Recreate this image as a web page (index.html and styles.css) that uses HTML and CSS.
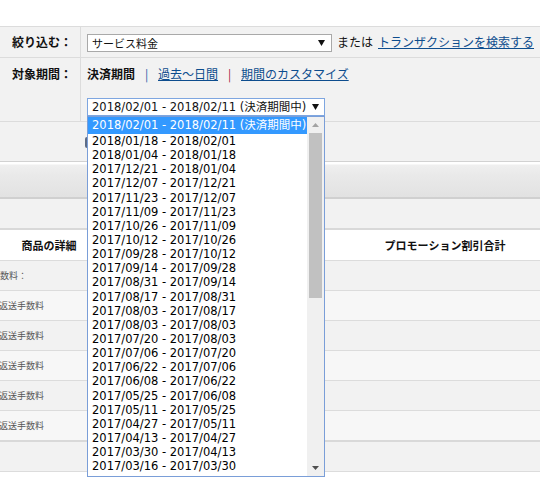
FILE: index.html
```html
<!DOCTYPE html>
<html lang="ja">
<head>
<meta charset="utf-8">
<title>トランザクション</title>
<link rel="stylesheet" href="styles.css">
</head>
<body>
<div class="page">
  <div class="filters">
    <div class="frow r1">
      <div class="flabel">絞り込む：</div>
      <div class="fbody">
        <div class="sel sel1"><span>サービス料金</span><svg class="arr" width="7" height="6" viewBox="0 0 7 6"><polygon points="0,0 7,0 3.5,6" fill="#111"/></svg></div>
        <span class="or">または</span>
        <a class="lnk" href="#">トランザクションを検索する</a>
      </div>
    </div>
    <div class="frow r2">
      <div class="flabel top">対象期間：</div>
      <div class="fbody col">
        <div class="periods">
          <b>決済期間</b><span class="sep blue">|</span><a class="lnk" href="#">過去～日間</a><span class="sep red">|</span><a class="lnk" href="#">期間のカスタマイズ</a>
        </div>
        <div class="selwrap">
          <div class="sel sel2"><span>2018/02/01 - 2018/02/11 (決済期間中)</span><svg class="arr" width="7" height="6" viewBox="0 0 7 6"><polygon points="0,0 7,0 3.5,6" fill="#111"/></svg></div>
          <div class="dropdown">
            <div class="dlist">
              <div class="ditem cur">2018/02/01 - 2018/02/11 (決済期間中)</div>
              <div class="ditem">2018/01/18 - 2018/02/01</div>
              <div class="ditem">2018/01/04 - 2018/01/18</div>
              <div class="ditem">2017/12/21 - 2018/01/04</div>
              <div class="ditem">2017/12/07 - 2017/12/21</div>
              <div class="ditem">2017/11/23 - 2017/12/07</div>
              <div class="ditem">2017/11/09 - 2017/11/23</div>
              <div class="ditem">2017/10/26 - 2017/11/09</div>
              <div class="ditem">2017/10/12 - 2017/10/26</div>
              <div class="ditem">2017/09/28 - 2017/10/12</div>
              <div class="ditem">2017/09/14 - 2017/09/28</div>
              <div class="ditem">2017/08/31 - 2017/09/14</div>
              <div class="ditem">2017/08/17 - 2017/08/31</div>
              <div class="ditem">2017/08/03 - 2017/08/17</div>
              <div class="ditem">2017/08/03 - 2017/08/03</div>
              <div class="ditem">2017/07/20 - 2017/08/03</div>
              <div class="ditem">2017/07/06 - 2017/07/20</div>
              <div class="ditem">2017/06/22 - 2017/07/06</div>
              <div class="ditem">2017/06/08 - 2017/06/22</div>
              <div class="ditem">2017/05/25 - 2017/06/08</div>
              <div class="ditem">2017/05/11 - 2017/05/25</div>
              <div class="ditem">2017/04/27 - 2017/05/11</div>
              <div class="ditem">2017/04/13 - 2017/04/27</div>
              <div class="ditem">2017/03/30 - 2017/04/13</div>
              <div class="ditem">2017/03/16 - 2017/03/30</div>
            </div>
            <div class="dscroll">
              <div class="sbtn"><svg width="7" height="4" viewBox="0 0 7 4"><polygon points="0,4 7,4 3.5,0" fill="#a3a3a3"/></svg></div>
              <div class="thumb"></div>
              <div class="sfill"></div>
              <div class="sbtn"><svg width="7" height="4" viewBox="0 0 7 4"><polygon points="0,0 7,0 3.5,4" fill="#505050"/></svg></div>
            </div>
          </div>
        </div>
      </div>
    </div>
    <div class="frow r3">
      <div class="btnedge"></div>
    </div>
  </div>
  <div class="hbar"></div>
  <div class="band"></div>
  <div class="tbl">
    <div class="trow thead">
      <div class="c1">商品の詳細</div>
      <div class="c2"></div>
      <div class="c3">プロモーション割引合計</div>
      <div class="c4"></div>
    </div>
    <div class="trow odd"><span class="cut c9">手数料：</span></div>
    <div class="trow even"><span class="cut c1x">返送手数料</span></div>
    <div class="trow odd"><span class="cut c1x">返送手数料</span></div>
    <div class="trow even"><span class="cut c1x">返送手数料</span></div>
    <div class="trow odd"><span class="cut c1x">返送手数料</span></div>
    <div class="trow even last"><span class="cut c1x">返送手数料</span></div>
    <div class="trow odd foot"></div>
  </div>
</div>
</body>
</html>
```
FILE: styles.css
```css
html, body {
  margin: 0;
  padding: 0;
  background: #fff;
}
body {
  width: 540px;
  height: 501px;
  overflow: hidden;
  font-family: "Noto Sans CJK JP", "Noto Sans", sans-serif;
  font-size: 12px;
  color: #111;
}
.page {
  padding-top: 26px;
}
.filters {
  background: #f2f2f2;
  border-top: 1px solid #dcdcdc;
}
.frow {
  display: flex;
  border-bottom: 1px solid #dcdcdc;
}
.r1 {
  height: 30px;
  align-items: stretch;
}
.r2 {
  height: 63px;
  align-items: stretch;
}
.r3 {
  height: 39px;
  border-bottom: none;
}
.flabel {
  width: 81px;
  flex: none;
  box-sizing: border-box;
  border-right: 1px solid #dcdcdc;
  padding-right: 8px;
  display: flex;
  align-items: center;
  justify-content: flex-end;
  font-weight: bold;
  line-height: 16px;
}
.flabel.top {
  align-items: flex-start;
  padding-top: 8px;
}
.fbody {
  display: flex;
  align-items: center;
  padding-left: 6px;
}
.fbody.col {
  flex-direction: column;
  align-items: flex-start;
  padding-top: 8px;
}
.sel {
  box-sizing: border-box;
  height: 18px;
  background: #fff;
  display: flex;
  align-items: center;
  justify-content: space-between;
  font-size: 11px;
  line-height: 16px;
  white-space: nowrap;
}
.sel1 {
  width: 245px;
  border: 1px solid #a9a9a9;
  padding: 0 6px 0 4px;
  margin-top: 1px;
}
.sel2 {
  width: 238px;
  border: 1px solid #7ea6e0;
  padding: 0 5px 0 4px;
  font-family: "DejaVu Sans", "Noto Sans CJK JP", sans-serif;
  font-size: 11.5px;
}
.arr {
  display: block;
  flex: none;
}
.or {
  margin-left: 5px;
  line-height: 16px;
}
.lnk {
  color: #0d4d8e;
  text-decoration: underline;
}
.r1 .lnk {
  margin-left: 5px;
  line-height: 16px;
}
.periods {
  line-height: 16px;
  height: 16px;
  display: flex;
  white-space: nowrap;
}
.periods b {
  font-weight: bold;
}
.sep {
  display: inline-block;
  width: 23px;
  text-align: center;
}
.sep.blue {
  color: #1f5fa6;
}
.sep.red {
  color: #9a1a3c;
}
.selwrap {
  position: relative;
  margin-top: 16px;
}
.dropdown {
  position: absolute;
  left: 0;
  top: 18px;
  width: 238px;
  height: 361px;
  box-sizing: border-box;
  border: 1px solid #7a9ed8;
  background: #fff;
  display: flex;
  z-index: 10;
}
.dlist {
  flex: 1;
  overflow: hidden;
  font-family: "DejaVu Sans", "Noto Sans CJK JP", sans-serif;
  font-size: 11.5px;
  color: #000;
}
.ditem {
  height: 14.15px;
  line-height: 14.15px;
  padding-left: 4px;
  white-space: nowrap;
}
.ditem.cur {
  height: 17px;
  line-height: 17px;
  background: #3399ff;
  color: #fff;
}
.dscroll {
  width: 17px;
  flex: none;
  background: #f0f0f0;
  display: flex;
  flex-direction: column;
  align-items: center;
}
.sbtn {
  height: 16px;
  width: 17px;
  display: flex;
  align-items: center;
  justify-content: center;
  flex: none;
}
.thumb {
  width: 13px;
  height: 165px;
  background: #c1c1c1;
  flex: none;
}
.sfill {
  flex: 1;
}
.btnedge {
  margin-left: 85px;
  margin-top: 15px;
  width: 12px;
  height: 11px;
  border-radius: 2px;
  background: #5d6c86;
}
.hbar {
  height: 35px;
  border-top: 1px solid #d2d2d2;
  border-bottom: 2px solid #d0d0d0;
  background: linear-gradient(#ffffff 0, #ffffff 2px, #efefef 3px, #e9e9e9 40%, #e2e2e2 100%);
}
.band {
  height: 29px;
  background: #f2f2f2;
  border-bottom: 2px solid #d9d9d9;
}
.tbl {
  overflow: hidden;
}
.trow {
  height: 29px;
  border-bottom: 1px solid #dcdcdc;
  display: flex;
  align-items: center;
  font-size: 9px;
  color: #555;
  white-space: nowrap;
}
.thead {
  height: 30px;
  display: grid;
  grid-template-columns: 98px 1fr 122px 34px;
  align-items: center;
  background: #fff;
  font-size: 11px;
  font-weight: bold;
  color: #111;
}
.thead .c1, .thead .c3 {
  text-align: center;
}
.odd {
  background: #f2f2f2;
}
.even {
  background: #f7f7f7;
}
.last {
  border-bottom: 2px solid #d9d9d9;
}
.foot {
  height: 29px;
}
.cut.c9 {
  margin-left: -9px;
}
.cut.c1x {
  margin-left: -1px;
}
```
